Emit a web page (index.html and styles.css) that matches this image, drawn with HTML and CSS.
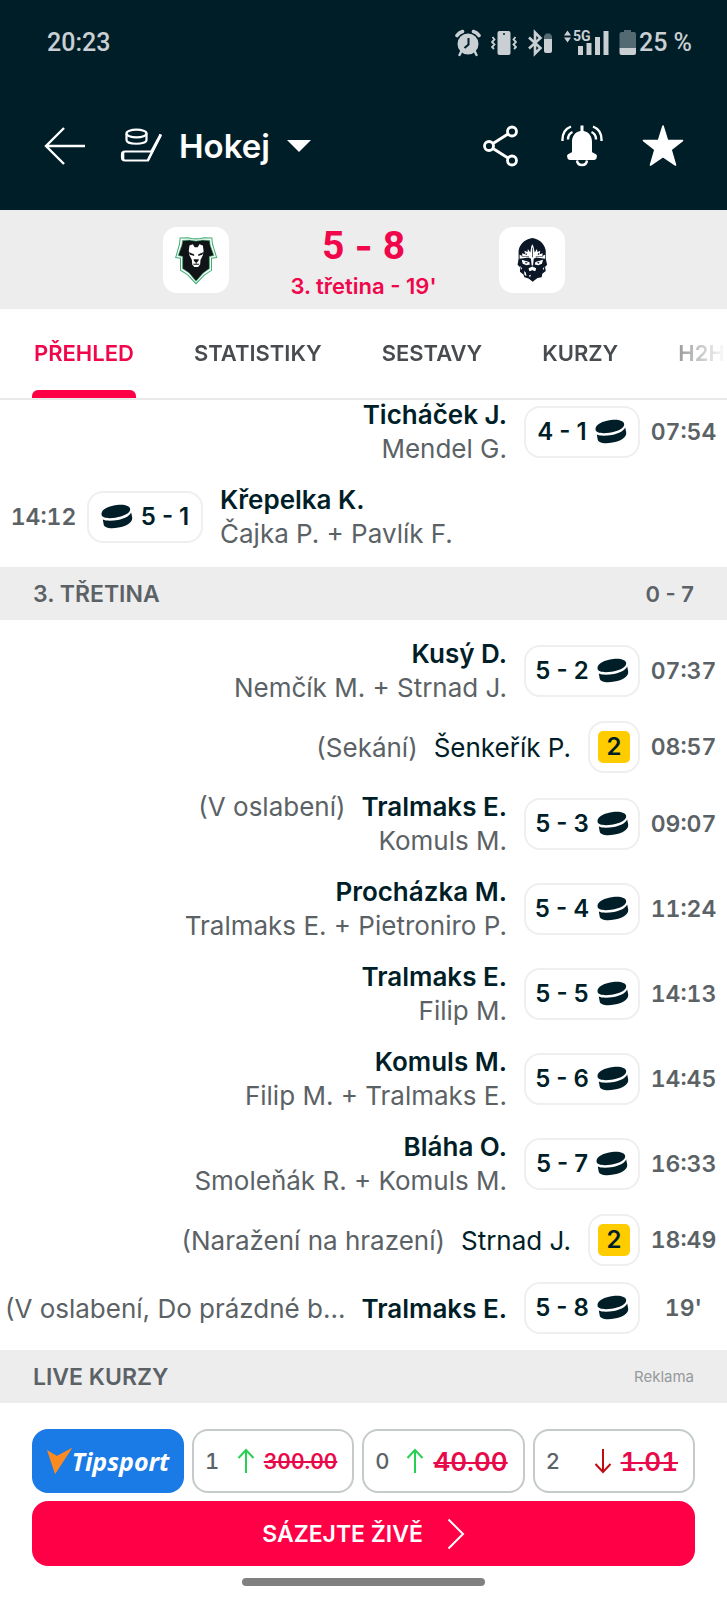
FILE: index.html
```html
<!DOCTYPE html>
<html lang="cs">
<head>
<meta charset="utf-8">
<meta name="viewport" content="width=device-width, initial-scale=1">
<title>Hokej 5-8</title>
<link rel="stylesheet" href="styles.css">
</head>
<body>
<svg class="defs" aria-hidden="true">
  <symbol id="puck" viewBox="0 0 32 26">
    <path d="M0.500 10.500C0 5 8 2 16 0.900C23 0 29 1.500 29.200 5.200C29.400 9.500 22 12.600 14.500 13.700C7 14.800 1 14 0.500 10.500Z"/>
    <path d="M1.800 15.600C5 17.200 11 17 17 16C23 15 28.500 12.400 30.200 8.600L31.200 13.500C32 18.500 25 22.300 17.500 23.600C10 25 3.500 24.300 2.700 20.500Z"/>
  </symbol>
  <symbol id="up" viewBox="0 0 18 26"><path d="M9 25V2M1.500 10L9 2L16.500 10" fill="none" stroke="currentColor" stroke-width="2"/></symbol>
  <symbol id="down" viewBox="0 0 18 26"><path d="M9 1V24M1.500 16L9 24L16.500 16" fill="none" stroke="currentColor" stroke-width="2"/></symbol>
</svg>

<header class="top">
  <div class="status">
    <span class="clock">20:23</span>
    <div class="status-icons">
      <svg width="26" height="28" viewBox="0 0 26 28"><circle cx="13" cy="15" r="10.500" fill="currentColor"/><path d="M2 6.500Q4 3.500 7.500 2.500M24 6.500Q22 3.500 18.500 2.500" fill="none" stroke="currentColor" stroke-width="3.600" stroke-linecap="round"/><path d="M6.500 22L4.500 26M19.500 22L21.500 26" stroke="currentColor" stroke-width="2.500" stroke-linecap="round"/><path d="M13.500 9V15.500L9.500 19" fill="none" stroke="#001e28" stroke-width="2"/></svg>
      <svg width="26" height="28" viewBox="0 0 26 28"><rect x="6.500" y="2" width="13" height="24" rx="2" fill="currentColor"/><circle cx="13" cy="5" r="1" fill="#001e28"/><path d="M1.500 8L3.500 10.500L1 13L3.500 15.500L1 18L3 20M24.500 8L22.500 10.500L25 13L22.500 15.500L25 18L23 20" fill="none" stroke="currentColor" stroke-width="1.800"/></svg>
      <svg width="26" height="28" viewBox="0 0 26 28"><path d="M2 8.500L13.500 19L8 24.500V3.500L13.500 9L2 19.500" fill="none" stroke="currentColor" stroke-width="2.600"/><path d="M17 10V7L19 4.500H23L25 7V10Z" fill="#546a72"/><path d="M17 10H25V22Q25 24 23 24H19Q17 24 17 22Z" fill="currentColor"/></svg>
      <svg class="signal" width="46" height="36" viewBox="0 -4 46 36"><path d="M1 6.500L4.500 1.500L8 6.500ZM1 8.500L4.500 13.500L8 8.500Z" fill="currentColor"/><text class="net" x="10" y="12" fill="currentColor">5G</text><path d="M15 17H20V26H15ZM23.500 14H28.500V26H23.500ZM32 8H37V26H32ZM40.500 2H45.500V26H40.500Z" fill="currentColor"/></svg>
      <svg width="18" height="28" viewBox="0 0 18 28"><path d="M5 1H12V3H15Q17 3 17 5V19H0.500V5Q0.500 3 2.500 3H5Z" fill="#546a72"/><path d="M0.500 19H17V24Q17 26 15 26H2.500Q0.500 26 0.500 24Z" fill="currentColor"/></svg>
      <span class="level">25 %</span>
    </div>
  </div>
  <div class="bar">
    <button class="icon-btn" aria-label="Zpět"><svg width="42" height="42" viewBox="0 0 42 42"><path d="M41 21H2M20 3L2 21L20 39" fill="none" stroke="currentColor" stroke-width="2.400"/></svg></button>
    <label class="sport">
      <svg width="42" height="42" viewBox="0 0 42 42" fill="none" stroke="currentColor" stroke-width="2.200"><ellipse cx="16.500" cy="8.500" rx="10" ry="3.800"/><path d="M6.500 8.500V15C6.500 20 26.500 20 26.500 15V8.500"/><path d="M31 26.500H5Q2 26.500 2 29.500V32Q2 35.500 5 35.500H28L41 10"/><path d="M28 35L40.500 9.500V11M31 27L40.500 9.500"/><path d="M3 27V35" stroke-width="2.600"/></svg>
      <select class="sport-name" aria-label="Sport"><option>Hokej</option></select>
      <svg width="24" height="12" viewBox="0 0 24 12"><path d="M0 0H24L12 12Z" fill="currentColor"/></svg>
    </label>
    <div class="actions">
      <button class="icon-btn" aria-label="Sdílet"><svg width="42" height="42" viewBox="0 0 42 42" fill="none" stroke="currentColor" stroke-width="2.800"><circle cx="9" cy="21" r="4.500"/><circle cx="32" cy="6.500" r="4.500"/><circle cx="32" cy="35.500" r="4.500"/><path d="M13 18.500L28 9M13 23.500L28 33"/></svg></button>
      <button class="icon-btn" aria-label="Upozornění"><svg width="42" height="42" viewBox="0 0 42 42"><path d="M19.500 0.500H22.500V6C28 7 31 11 31 17V27C32 28 36 29 36 31Q36 34 33.500 35H8.500Q6 34 6 31C6 29 10 28 11 27V17C11 11 14 7 19.500 6Z" fill="currentColor"/><path d="M16 35.500Q16.500 40 21 40Q25.500 40 26 35.500" fill="none" stroke="currentColor" stroke-width="2.400"/><path d="M1.500 16Q1 5 10 1.500M7 14.500Q7 9 11.500 7M40.500 16Q41 5 32 1.500M35 14.500Q35 9 30.500 7" fill="none" stroke="currentColor" stroke-width="2.400"/></svg></button>
      <button class="icon-btn" aria-label="Oblíbené"><svg width="42" height="42" viewBox="0 0 42 42"><path d="M21 1L25.500 15.500H40.500L29 24.500L33.500 40L21 31.500L8.500 40L13 24.500L1.500 15.500H16.500Z" fill="currentColor" stroke="currentColor" stroke-width="1.600" stroke-linejoin="round"/></svg></button>
    </div>
  </div>
</header>

<main>
  <section class="match">
    <div class="crest"><svg viewBox="0 0 192 192">
      <path d="M50 32L74 31Q96 38 118 31L142 32L144 50L156 89L141 91V126L121 139L96 165L72 139L51 126V91L37 89L48 50Z" fill="#fff" stroke="#3fae74" stroke-width="3"/>
      <path d="M57 39L78 38Q96 44 114 38L136 39L137 52L148 83L135 86V121L117 134L96 158L76 134L57 121V86L44 83L55 52Z" fill="#111416" stroke="#3fae74" stroke-width="2"/>
      <path d="M77 54L87 50L92 59H101L106 50L116 54L118 70L116 82L109 96L108 109L102 116H91L85 109L84 96L77 82L75 70Z" fill="#fff"/>
      <path d="M74 73L90 79L91 84L79 81ZM119 73L103 79L102 84L114 81ZM89 94H104L103 99L98 103V106H95V103L90 99ZM87 107H106L104 110H89Z" fill="#111416"/>
    </svg></div>
    <div class="result">
      <div class="score"><span>5</span><span class="dash">-</span><span>8</span></div>
      <div class="phase">3. třetina - 19'</div>
    </div>
    <div class="crest"><svg viewBox="0 0 192 192">
      <path d="M57 92V68C62 44 80 36 97 32C114 36 131 44 136 68V92L140 110L134 116L136 128L126 136L124 146L112 148L98 159L86 150L74 146L71 138L61 130L62 118L54 110Z" fill="#0b1626"/>
      <path d="M60 81L68 84L67 76L76 79L74 69L83 73L84 64L91 74L94 56L97 50L100 56L104 74L110 64L112 73L120 69L118 79L127 76L126 84L134 81V92L108 89L101 92L99 112H95L93 92L86 89L60 92Z" fill="#fff"/>
      <path d="M66 84H87V86H66ZM107 84H128V86H107ZM96 60H98V88H96ZM78 74L82 81H77ZM116 74L117 81H112Z" fill="#0b1626"/>
      <path d="M66 95L88 102L90 109L80 111L69 107ZM128 95L106 102L104 109L114 111L125 107ZM86 120L97 115L108 120L106 128H102L97 125L92 128H88ZM61 113L67 120L65 124ZM132 115L127 122L130 125ZM73 128L78 132L80 143L74 139ZM87 141L93 139L90 147Z" fill="#fff"/>
      <path d="M76 101L84 104L78 107ZM118 101L110 104L116 107Z" fill="#0b1626"/>
    </svg></div>
  </section>

  <nav class="tabs">
    <div class="tab-strip">
      <a class="tab active" href="#prehled">PŘEHLED</a>
      <a class="tab" href="#statistiky">STATISTIKY</a>
      <a class="tab" href="#sestavy">SESTAVY</a>
      <a class="tab" href="#kurzy">KURZY</a>
      <a class="tab" href="#h2h">H2H</a>
    </div>
  </nav>

  <section class="events scrolled">
    <div class="event away"><div class="text"><div><b>Ticháček J.</b></div><div>Mendel G.</div></div><div class="pill">4 - 1<svg class="puck"><use href="#puck"/></svg></div><time>07:54</time></div>
    <div class="event home"><time>14:12</time><div class="pill"><svg class="puck"><use href="#puck"/></svg>5 - 1</div><div class="text"><div><b>Křepelka K.</b></div><div>Čajka P. + Pavlík F.</div></div></div>
  </section>

  <div class="section-head"><h2>3. TŘETINA</h2><span class="partial">0 - 7</span></div>

  <section class="events">
    <div class="event away"><div class="text"><div><b>Kusý D.</b></div><div>Nemčík M. + Strnad J.</div></div><div class="pill">5 - 2<svg class="puck"><use href="#puck"/></svg></div><time>07:37</time></div>
    <div class="event away"><div class="text"><div class="line"><span>(Sekání)</span><span class="name">Šenkeřík P.</span></div></div><div class="pill penalty"><span class="card">2</span></div><time>08:57</time></div>
    <div class="event away"><div class="text"><div class="line"><span>(V oslabení)</span><b>Tralmaks E.</b></div><div>Komuls M.</div></div><div class="pill">5 - 3<svg class="puck"><use href="#puck"/></svg></div><time>09:07</time></div>
    <div class="event away"><div class="text"><div><b>Procházka M.</b></div><div>Tralmaks E. + Pietroniro P.</div></div><div class="pill">5 - 4<svg class="puck"><use href="#puck"/></svg></div><time>11:24</time></div>
    <div class="event away"><div class="text"><div><b>Tralmaks E.</b></div><div>Filip M.</div></div><div class="pill">5 - 5<svg class="puck"><use href="#puck"/></svg></div><time>14:13</time></div>
    <div class="event away"><div class="text"><div><b>Komuls M.</b></div><div>Filip M. + Tralmaks E.</div></div><div class="pill">5 - 6<svg class="puck"><use href="#puck"/></svg></div><time>14:45</time></div>
    <div class="event away"><div class="text"><div><b>Bláha O.</b></div><div>Smoleňák R. + Komuls M.</div></div><div class="pill">5 - 7<svg class="puck"><use href="#puck"/></svg></div><time>16:33</time></div>
    <div class="event away"><div class="text"><div class="line"><span>(Naražení na hrazení)</span><span class="name">Strnad J.</span></div></div><div class="pill penalty"><span class="card">2</span></div><time>18:49</time></div>
    <div class="event away"><div class="text"><div class="line"><span>(V oslabení, Do prázdné b...</span><b>Tralmaks E.</b></div></div><div class="pill">5 - 8<svg class="puck"><use href="#puck"/></svg></div><time>19'</time></div>
  </section>

  <div class="section-head"><h2>LIVE KURZY</h2><span class="ad">Reklama</span></div>

  <section class="betting">
    <div class="odds">
      <a class="brand" href="#tipsport"><svg width="25" height="26" viewBox="0 0 25 26"><path d="M0 2L10 8L25 0L8 26Z" fill="#ff8a1c"/><path d="M10 8L25 0L8 26Z" fill="#f98a26"/></svg><span>Tipsport</span></a>
      <button class="odd"><span class="pick">1</span><svg class="up"><use href="#up"/></svg><s class="small">300.00</s></button>
      <button class="odd"><span class="pick">0</span><svg class="up"><use href="#up"/></svg><s>40.00</s></button>
      <button class="odd"><span class="pick">2</span><svg class="down"><use href="#down"/></svg><s>1.01</s></button>
    </div>
    <button class="bet">SÁZEJTE ŽIVĚ<svg width="18" height="32" viewBox="0 0 18 32"><path d="M1.500 1.500L16 16L1.500 30.500" fill="none" stroke="currentColor" stroke-width="2"/></svg></button>
  </section>
  <div class="home-bar"></div>
</main>
</body>
</html>
```
FILE: styles.css
```css
* { box-sizing: border-box; }
body { margin: 0; min-height: 100vh; background: #fff; font-family: Inter, "Noto Sans", sans-serif; color: #001e28; }
button { border: 0; padding: 0; background: none; font: inherit; color: inherit; }
a { text-decoration: none; color: inherit; }
svg { display: block; flex: none; }
.defs { position: absolute; width: 0; height: 0; }

.top { background: #001e28; color: #fff; }
.status { display: flex; justify-content: space-between; align-items: center; height: 86px; padding: 0 35px 0 47px; color: #c9cfd3; font: 500 25px/28px Roboto, sans-serif; }
.status-icons { display: flex; align-items: center; gap: 10px; }
.level { margin-left: -8px; }
.net { font: 700 14px Roboto, sans-serif; }
.bar { display: flex; align-items: center; height: 124px; padding: 0 43px 4px 44px; }
.icon-btn { display: block; }
.sport { display: flex; align-items: center; gap: 17px; margin-left: 34px; }
.sport-name { appearance: none; border: 0; padding: 0; margin: 0; background: none; color: #fff; font: 600 33px/40px Inter, sans-serif; }
.actions { display: flex; gap: 39px; margin-left: auto; }

.match { display: flex; justify-content: center; align-items: center; height: 99px; background: #ededed; }
.crest { width: 66px; height: 66px; border-radius: 14px; background: #fff; }
.crest svg { width: 100%; height: 100%; }
.result { width: 270px; padding-top: 8px; text-align: center; color: #f0064a; }
.score { display: flex; justify-content: center; align-items: center; gap: 10px; font: 700 39px/44px Roboto, sans-serif; }
.dash { font-family: Inter, sans-serif; }
.phase { font-weight: 600; font-size: 22px; line-height: 36px; }

.tabs { position: relative; z-index: 1; height: 91px; background: #fff; border-bottom: 2px solid #e9e9e9; }
.tab-strip { display: flex; gap: 56px; height: 100%; padding-left: 32px; overflow: hidden; mask-image: linear-gradient(to right, #000 calc(100% - 88px), transparent); }
.tab { flex: none; padding: 0 2px; font-weight: 600; font-size: 22px; line-height: 88px; color: #484c50; }
.tab.active { position: relative; color: #f0064a; }
.tab.active::after { content: ""; position: absolute; left: 0; right: 0; bottom: 0; height: 8px; border-radius: 6px 6px 0 0; background: #ff0046; }

.events { padding: 8px 0; }
.scrolled { margin-top: -11px; padding-top: 0; }
.event { display: flex; align-items: center; padding: 8px 10px; font-size: 26px; line-height: 34px; color: #5b6266; white-space: nowrap; }
.event b { font-weight: 600; color: #001e28; }
.event .name { color: #001e28; }
.text { flex: 1; min-width: 0; padding: 1px 17px 0; }
.away .text { display: flex; flex-direction: column; align-items: flex-end; }
.line { display: flex; gap: 16px; }
.event time { width: 67px; text-align: center; font-weight: 600; font-size: 23px; font-variant-numeric: tabular-nums; }
.away time { margin-left: 10px; }
.home time { margin-right: 10px; }
.pill { display: flex; align-items: center; justify-content: center; gap: 8px; width: 116px; height: 52px; border: 2px solid #efefef; border-radius: 16px; font-weight: 600; font-size: 24px; color: #001e28; }
.puck { width: 32px; height: 26px; fill: #001e28; }
.penalty { width: 52px; }
.card { width: 32px; height: 32px; border-radius: 5px; background: #fc0; text-align: center; font: 600 24px/32px Inter, sans-serif; }

.section-head { display: flex; justify-content: space-between; align-items: center; height: 53px; padding: 0 33px; background: #ededed; color: #5b6266; font-weight: 600; font-size: 22px; }
.section-head h2 { margin: 0; font-size: 23px; font-weight: 600; }
.section-head .ad { font-weight: 400; font-size: 15px; color: #969a9c; }

.betting { display: flex; flex-direction: column; gap: 8px; padding: 26px 32px 12px; }
.odds { display: flex; gap: 8px; font-variant-numeric: tabular-nums; }
.odds > * { height: 64px; border-radius: 16px; }
.brand { display: flex; align-items: center; justify-content: center; flex: 0 0 152px; background: #1a7ae6; color: #fff; font: italic 700 25px/30px "Open Sans", sans-serif; }
.odd { display: flex; align-items: center; flex: 1; padding: 0 15px 0 11px; border: 2px solid #c5cacb; font-variant-numeric: inherit; }
.pick { font-weight: 500; font-size: 22px; color: #5b6266; }
.odd svg { width: 18px; height: 26px; margin: 0 9px 0 auto; }
.odd .up { color: #27cf53; }
.odd .down { color: #c00d14; }
.odd s { font-weight: 600; font-size: 26px; color: #e8094a; text-decoration-thickness: 2px; }
.odd .small { font-size: 21px; }
.bet { display: flex; align-items: center; justify-content: center; gap: 24px; height: 65px; border-radius: 16px; background: #ff0046; color: #fff; font-weight: 600; font-size: 23px; }
.home-bar { width: 33.4%; height: 8px; margin: 0 auto; border-radius: 4px; background: #808080; }
```
